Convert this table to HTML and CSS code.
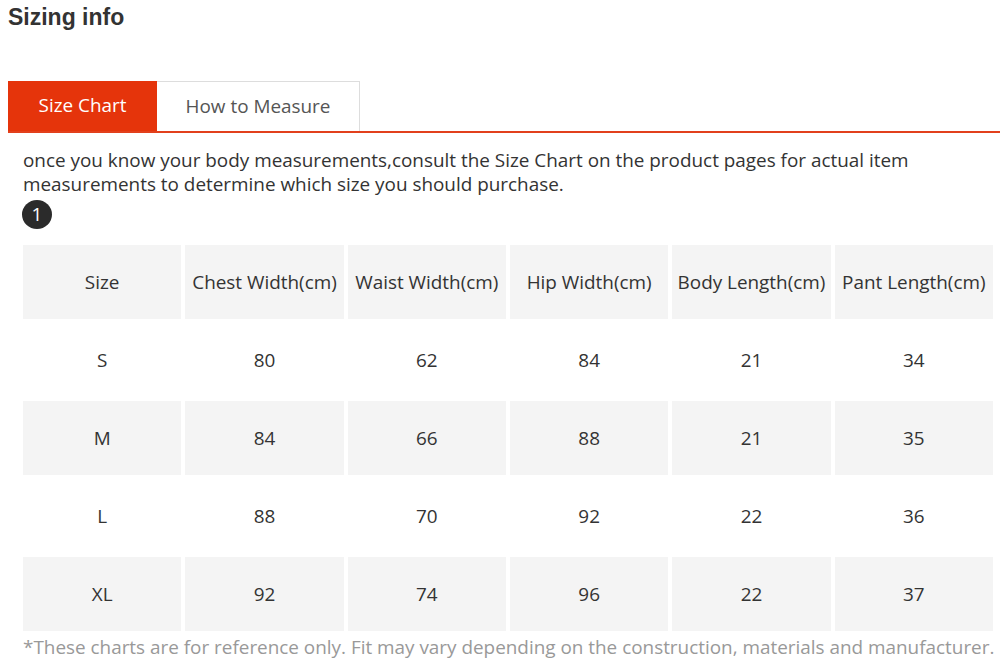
FILE: index.html
```html
<!DOCTYPE html>
<html>
<head>
<meta charset="utf-8">
<link rel="stylesheet" href="styles.css">
</head>
<body>
<div class="page">
  <h2 class="title">Sizing info</h2>
  <div class="tabs">
    <div class="tab active">Size Chart</div>
    <div class="tab">How to Measure</div>
  </div>
  <div class="panel">
    <p class="intro">once you know your body measurements,consult the Size Chart on the product pages for actual item measurements to determine which size you should purchase.</p>
    <div class="badge">1</div>
    <table class="chart">
      <tr class="grey"><td>Size</td><td>Chest Width(cm)</td><td>Waist Width(cm)</td><td>Hip Width(cm)</td><td>Body Length(cm)</td><td>Pant Length(cm)</td></tr>
      <tr><td>S</td><td>80</td><td>62</td><td>84</td><td>21</td><td>34</td></tr>
      <tr class="grey"><td>M</td><td>84</td><td>66</td><td>88</td><td>21</td><td>35</td></tr>
      <tr><td>L</td><td>88</td><td>70</td><td>92</td><td>22</td><td>36</td></tr>
      <tr class="grey"><td>XL</td><td>92</td><td>74</td><td>96</td><td>22</td><td>37</td></tr>
    </table>
    <p class="note">*These charts are for reference only. Fit may vary depending on the construction, materials and manufacturer.</p>
  </div>
</div>
</body>
</html>
```

FILE: styles.css
```css
html, body {
  margin: 0;
  padding: 0;
  background: #fff;
}
.page {
  padding: 0 0 0 8px;
  font-family: "Open Sans", "Liberation Sans", sans-serif;
  color: #333;
}
.title {
  margin: 0;
  padding-top: 3px;
  height: 78px;
  font-family: "Liberation Sans", Arial, sans-serif;
  font-weight: bold;
  font-size: 23px;
  line-height: 28px;
  color: #333;
}
.tabs {
  display: flex;
  border-bottom: 2px solid #e2401c;
  height: 50px;
}
.tab {
  box-sizing: border-box;
  height: 50px;
  display: flex;
  align-items: center;
  justify-content: center;
  font-size: 18.9px;
  color: #555;
  border: 1px solid #ddd;
  border-bottom: none;
  border-left: none;
  width: 203px;
  padding-bottom: 2px;
}
.tab.active {
  width: 149px;
  background: #e5340b;
  color: #fff;
  border: none;
}
.panel {
  padding: 15px 0 0 15px;
}
.intro {
  margin: 0;
  font-size: 18.9px;
  line-height: 24px;
  padding-right: 70px;
  color: #333;
}
.badge {
  margin-top: 4px;
  margin-left: -1px;
  width: 30px;
  height: 29px;
  border-radius: 50%;
  background: #2b2b2b;
  color: #fff;
  font-size: 19px;
  line-height: 29px;
  text-align: center;
}
.chart {
  border-collapse: separate;
  border-spacing: 4px;
  margin: 12px 0 0 -4px;
  width: 978px;
  table-layout: fixed;
}
.chart td {
  height: 74px;
  padding: 0;
  text-align: center;
  vertical-align: middle;
  font-size: 18.9px;
  color: #333;
}
.chart tr.grey td {
  background: #f4f4f4;
}
.note {
  margin: 0;
  font-size: 18.9px;
  line-height: 24px;
  color: #999;
  white-space: nowrap;
}
```
